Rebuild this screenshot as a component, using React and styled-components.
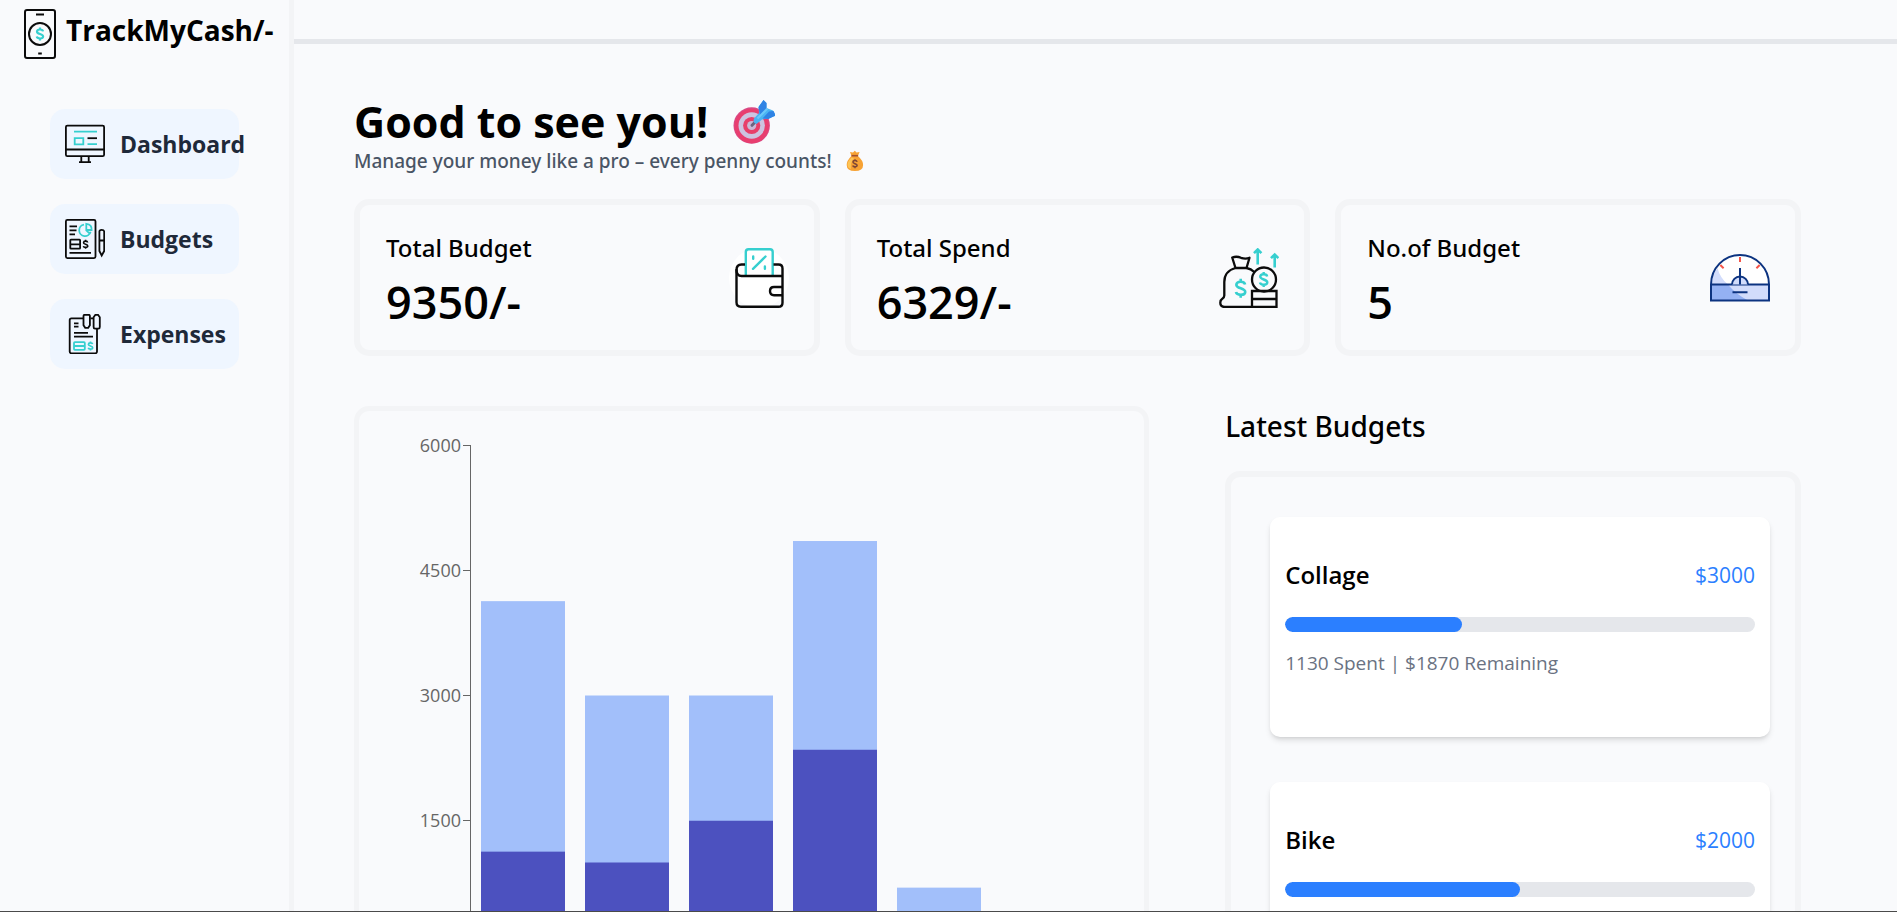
import React from 'react';
import styled, { createGlobalStyle } from 'styled-components';

const GlobalStyle = createGlobalStyle`
  *, *::before, *::after { box-sizing: border-box; }
  body {
    margin: 0;
    background: #f9fafc;
    color: #000;
    font-family: 'Open Sans', 'Noto Sans', sans-serif;
  }
  h1, h2, h3, p { margin: 0; }
`;

const INK = '#0b0b0b';
const TEAL = '#36cfcf';
const MEDIUM_FONT = "'Noto Sans', 'Open Sans', sans-serif";

/* ---------- layout ---------- */

const Shell = styled.div`
  display: grid;
  grid-template-columns: 294px minmax(0, 1fr);
  height: 100vh;
  overflow: hidden;
  border-bottom: 1px solid #4a4a4a;
`;

const Sidebar = styled.aside`
  border-right: 5px solid #f3f4f6;
`;

const Brand = styled.a`
  display: flex;
  gap: 10px;
  height: 59px;
  padding: 9px 0 0 24px;
  color: #000;
  font-size: 28px;
  font-weight: 700;
  line-height: 42px;
  text-decoration: none;
  white-space: nowrap;
`;

const Nav = styled.nav`
  display: flex;
  flex-direction: column;
  gap: 25px;
  padding: 50px 50px 0;
`;

const NavLink = styled.a`
  display: flex;
  align-items: center;
  gap: 15px;
  height: 70px;
  padding: 0 15px;
  border-radius: 15px;
  background: #eff6ff;
  color: #1e2939;
  font-size: 23px;
  font-weight: 700;
  line-height: 40px;
  white-space: nowrap;
  text-decoration: none;

  svg { flex: none; }
`;

const Main = styled.main`
  min-width: 0;
`;

const TopBar = styled.header`
  height: 44px;
  border-bottom: 5px solid #e5e7eb;
`;

const Content = styled.div`
  padding: 53px 96px 0 60px;
`;

const Title = styled.h1`
  display: flex;
  align-items: center;
  gap: 25px;
  font-size: 43px;
  font-weight: 700;
  line-height: 50px;
`;

const Subtitle = styled.p`
  display: flex;
  align-items: center;
  gap: 14px;
  margin-bottom: 24px;
  color: #4a5565;
  font-family: ${MEDIUM_FONT};
  font-size: 19px;
  font-weight: 500;
  line-height: 28px;
`;

const Stats = styled.section`
  display: grid;
  grid-template-columns: repeat(3, minmax(0, 1fr));
  gap: 25px;
  margin-bottom: 50px;
`;

const StatCard = styled.article`
  display: flex;
  align-items: center;
  justify-content: space-between;
  padding: 25px 25px 24px 26px;
  border: 6px solid #f3f4f6;
  border-radius: 15px;
`;

const StatLabel = styled.h2`
  margin-bottom: 12px;
  font-family: ${MEDIUM_FONT};
  font-size: 24px;
  font-weight: 500;
  line-height: 36px;
`;

const StatValue = styled.p`
  font-size: 45px;
  font-weight: 600;
  line-height: 48px;
`;

const Panels = styled.section`
  display: grid;
  grid-template-columns: minmax(0, 58fr) minmax(0, 42fr);
  gap: 76px;
`;

const ChartPanel = styled.div`
  padding: 25px;
  border: 5px solid #f3f4f6;
  border-radius: 15px;

  svg { display: block; }
  text {
    fill: #666;
    font-size: 18px;
  }
`;

const PanelHeading = styled.h2`
  margin-bottom: 25px;
  font-family: ${MEDIUM_FONT};
  font-size: 28px;
  font-weight: 500;
  line-height: 40px;
`;

const BudgetList = styled.ul`
  display: flex;
  flex-direction: column;
  gap: 45px;
  margin: 0;
  padding: 40px 25px 40px 39px;
  border: 6px solid #f3f4f6;
  border-radius: 15px;
  list-style: none;
`;

const BudgetCard = styled.li`
  min-height: 220px;
  padding: 38px 15px 0;
  border-radius: 10px;
  background: #fff;
  box-shadow: 0 4px 6px -1px rgba(0, 0, 0, 0.12), 0 2px 4px -2px rgba(0, 0, 0, 0.12);
`;

const BudgetRow = styled.div`
  display: flex;
  justify-content: space-between;
  margin-bottom: 22px;
  line-height: 40px;
`;

const BudgetName = styled.h3`
  font-size: 24px;
  font-weight: 600;
`;

const BudgetAmount = styled.span`
  color: #2b7fff;
  font-size: 21px;
`;

const Track = styled.div`
  height: 15px;
  margin-bottom: 16px;
  border-radius: 8px;
  background: #e5e7eb;
  overflow: hidden;
`;

const Fill = styled.div`
  height: 100%;
  border-radius: 8px;
  background: #2b7fff;
`;

const BudgetNote = styled.p`
  color: #6a7282;
  font-size: 19px;
  line-height: 30px;
`;

/* ---------- icons ---------- */

const Dollar = ({ x, y, h, color, w }) => (
  <path
    transform={`translate(${x} ${y}) scale(${h / 10})`}
    d="M2.3 -2 C2 -4 -2.2 -4 -2.3 -1.8 C-2.3 .2 2.4 -.2 2.4 1.9 C2.3 4 -2.1 3.9 -2.5 2 M0 -5 V-3.4 M0 3.4 V5"
    fill="none"
    stroke={color}
    strokeWidth={(w * 10) / h}
  />
);

const PhoneIcon = () => (
  <svg width="32" height="50" viewBox="24 9 32 50" fill="none" stroke={INK} strokeWidth="2" aria-hidden="true">
    <rect x="25" y="10" width="30" height="48" rx="2" />
    <path d="M36 14.5h8M38.2 53.5h3.6" />
    <circle cx="40" cy="34" r="11" />
    <Dollar x={40} y={34} h={13} w={2.2} color={TEAL} />
  </svg>
);

const MonitorIcon = () => (
  <svg width="40" height="40" viewBox="65 124 40 40" fill="none" stroke={INK} strokeWidth="1.8" aria-hidden="true">
    <rect x="65.9" y="125.6" width="38.2" height="30.6" rx="1.5" />
    <path d="M66 149.5h38M81.3 156v5.6M88.7 156v5.6M79 162.2h12" />
    <path d="M87.5 138.2h9.5" />
    <path stroke={TEAL} d="M74 131.6h23M87.5 144.2h9.5M74.7 138.2h8.6v6.2h-8.6z" />
  </svg>
);

const ReportIcon = () => (
  <svg width="40" height="40" viewBox="65 219 40 40" fill="none" stroke={INK} strokeWidth="1.8" aria-hidden="true">
    <rect x="65.9" y="219.9" width="29.6" height="38.2" rx="1.5" />
    <path d="M69.5 226.3h7.5M69.5 230.3h7M69.5 234.3h5.5M69.5 252.9h21.5" />
    <path d="M70.3 240.3q0-.6.6-.6h8.6q.6 0 .6.6v7.6q0 .8-.8.8h-8.4q-.6 0-.6-.8zM70.3 244.4h9.8" />
    <Dollar x={85.6} y={244.3} h={9} w={1.6} color={INK} />
    <path d="M99.4 231.5q0-1.700 2.300-1.700t2.500 1.700v19.500l-2.500 4.500l-2.300-4.500zM99.4 240.500h4.800" />
    <path stroke={TEAL} strokeWidth="1.8" d="M84 224.600a5.800 5.800 0 1 0 6.600 7.200M86.300 223.800v6.200h5.300q.6-5.500-5.300-6.200zM86 230.200l4 3.600" />
  </svg>
);

const ReceiptIcon = () => (
  <svg width="40" height="40" viewBox="65 314 40 40" fill="none" stroke={INK} strokeWidth="1.8" aria-hidden="true">
    <path d="M83 318.300H71.500q-1.800 0-1.800 1.800v31.400q0 1.800 1.800 1.800h23.700q1.800 0 1.800-1.800V329M90.500 318.300h3" />
    <path d="M83.500 316q0-1.200 1.200-1.200h4q1.200 0 1.200 1.200v9.200l-1.700 2.600h-3l-1.700-2.600z" />
    <path d="M93.600 317.200l1.800-2.400h2.600l1.800 2.400v9.800q0 1.600-1.400 1.600h-3.400q-1.400 0-1.400-1.600z" />
    <path d="M74 323.300h4.500M74 326.600h4.500M74 332.900h14M74 336.600h19" />
    <path stroke={TEAL} d="M74 342.900q0-.8.800-.8h9.200q.8 0 .8.8v6.200q0 .8-.8.8h-9.200q-.8 0-.8-.8zM74 346h10.800" />
    <Dollar x={90.500} y={346} h={9} w={1.700} color={TEAL} />
  </svg>
);

const WalletIcon = () => (
  <svg width="60" height="60" viewBox="729 248 60 60" fill="none" stroke={INK} strokeWidth="2.4" aria-hidden="true">
    <circle cx="759" cy="278" r="30" fill="#fff" stroke="none" />
    <path stroke={TEAL} d="M745.800 275v-23q0-2.700 2.700-2.700h21.500q2.700 0 2.700 2.700v23" />
    <path stroke={TEAL} strokeLinecap="round" d="M753 268.800l12.500-12.300M753.200 256.500v2.300M764.900 266.500v2.300" />
    <path d="M745 264.500h-3.500q-5 0-5 5.500q0 6 5 6h41.500" />
    <path d="M773.500 264.500h5q4 0 4 4v34.300q0 4-4 4h-37.500q-4.500 0-4.500-4.500v-33" />
    <path d="M782.500 287h-8.500q-4 0-4 4.100t4 4.100h8.500" />
  </svg>
);

const MoneyBagIcon = () => (
  <svg width="60" height="60" viewBox="1219 248 60 60" fill="none" stroke={INK} strokeWidth="2.3" aria-hidden="true">
    <path d="M1235.500 268l-3.300-10.500q4.500-1.600 8.800.3q4.500 1.500 8.500 0l-3 10.200z" strokeLinejoin="round" />
    <path d="M1235.500 268q-11.200 3-11.200 14v13.500q0 2-2 3.300q-2 1.200-2 4q0 4.200 4.500 4.200h27" />
    <path d="M1246.500 268q4.500.8 7.800 4" />
    <circle cx="1264" cy="279.500" r="12" />
    <path d="M1252 291h24.500v15.800h-24.500zM1252 299h24.500" />
    <Dollar x={1240.700} y={288.300} h={19} w={2.600} color={TEAL} />
    <Dollar x={1263.700} y={279.500} h={15} w={2.400} color={TEAL} />
    <path stroke={TEAL} strokeWidth="2.600" d="M1257.700 264.500v-14M1254 253.200l3.700-3.700l3.700 3.700M1274.700 267.500v-12M1271 258.200l3.700-3.700l3.700 3.700" />
  </svg>
);

const GaugeIcon = () => (
  <svg width="60" height="60" viewBox="1710 248 60 60" fill="none" stroke="#0c3380" strokeWidth="2" aria-hidden="true">
    <path stroke="none" fill="#fff" d="M1711 284.500a29 29.500 0 0 1 58 0z" />
    <path stroke="none" fill="#d2dcfb" d="M1711 284.500q.5-8.500 6.500-16.500q2.500 10 10.500 16.500z" />
    <path stroke="none" fill="#d2dcfb" d="M1711 284.500h58v16h-58z" />
    <path stroke="none" fill="#94b1f3" d="M1711 284.500h17q7 9 20 16h-37z" />
    <path d="M1711 284.500a29 29.500 0 0 1 58 0v16h-58zM1711 284.500h58" />
    <path fill="#d2dcfb" d="M1732 284.500a8 8 0 0 1 16 0" />
    <path d="M1740 268v16.500M1732.500 292.300h15" />
    <path stroke="#f5564a" d="M1740 257v5M1720.300 265l3.300 3.300M1759.700 265l-3.300 3.300" />
  </svg>
);

const TargetEmoji = () => (
  <svg width="42" height="46" viewBox="707 99 42 46" aria-hidden="true">
    <circle cx="725.700" cy="125.500" r="18.200" fill="#d84a86" />
    <circle cx="725.700" cy="126" r="17.200" fill="#e83e6f" />
    <circle cx="725.700" cy="125.500" r="13.200" fill="#cdc3e0" />
    <circle cx="725.700" cy="125.500" r="8.600" fill="#e83e6a" />
    <circle cx="725.700" cy="125.500" r="4.600" fill="#c9b8d6" />
    <path d="M726 125.300l5-5" stroke="#6b6480" strokeWidth="3" strokeLinecap="round" />
    <path d="M728 118.500l5-5.500l-.5-6l5-7l3 3v5l6.500 2.500l3 5l-8 3l-6 1l-5.500 4.500q-4-1-2.500-5.500z" fill="#4bb4f2" />
    <path d="M732.500 107l5-7l3 3v5.500l-6.500 7zM736.500 118.500l6.500-7l4.500-.5l2 4.500l-7 3.500z" fill="#2f83e4" />
    <path d="M731.500 118.500l10-10" stroke="#6cc8fa" strokeWidth="2" />
  </svg>
);

const BagEmoji = () => (
  <svg width="18" height="22" viewBox="812 149 18 22" aria-hidden="true">
    <path d="M817.500 155l-1.500-4l3 .500l1.800-1.800l1.800 1.800l3-.5l-1.700 4q5.200 4.500 5.200 9q0 6-8.200 6t-8.200-6q0-4.500 4.800-9z" fill="#f7a234" />
    <path d="M817.500 156.500q-4 4-4 7q0 3.500 3.500 4.500q-1-6 3-11z" fill="#fdc456" />
    <path d="M817.500 154.700h6.600" stroke="#a3502e" strokeWidth="1.600" />
    <Dollar x={821} y={162.700} h={9} w={1.500} color="#7c4536" />
  </svg>
);

/* ---------- chart ---------- */

const budgets = [
  { name: 'Collage', amount: 3000, spent: 1130 },
  { name: 'Bike', amount: 2000, spent: 1000 },
  { name: 'Travel', amount: 1500, spent: 1500 },
  { name: 'Home', amount: 2500, spent: 2350 },
  { name: 'Books', amount: 350, spent: 349 },
];

const AXIS_X = 86;
const AXIS_TOP = 9;
const AXIS_HEIGHT = 501;
const AXIS_MAX = 6000;
const BAR_PITCH = 104;
const BAR_WIDTH = 84;
const TICKS = [0, 1500, 3000, 4500, 6000];
const toY = (value) => AXIS_TOP + AXIS_HEIGHT * (1 - value / AXIS_MAX);
const tickY = (value) => Math.floor(toY(value));

const BudgetChart = () => (
  <svg width="640" height="540" viewBox="0 0 640 540" role="img" aria-label="Budget and spend per category">
    {budgets.map((b, i) => {
      const x = AXIS_X + 11 + i * BAR_PITCH;
      const top = toY(b.spent + b.amount);
      const split = toY(b.spent);
      return (
        <g key={b.name}>
          <rect x={x} y={top} width={BAR_WIDTH} height={toY(0) - top} fill="#a2bffa" />
          <rect x={x} y={split} width={BAR_WIDTH} height={toY(0) - split} fill="#4c51bf" />
        </g>
      );
    })}
    <g stroke="#666" shapeRendering="crispEdges">
      <line x1={AXIS_X + 0.5} x2={AXIS_X + 0.5} y1={AXIS_TOP} y2={toY(0)} />
      {TICKS.map((v) => (
        <line key={v} x1={AXIS_X - 7} x2={AXIS_X} y1={tickY(v)} y2={tickY(v)} />
      ))}
    </g>
    {TICKS.map((v) => (
      <text key={v} x={AXIS_X - 9} y={tickY(v) + 7} textAnchor="end">{v}</text>
    ))}
  </svg>
);

/* ---------- page ---------- */

const navItems = [
  { label: 'Dashboard', Icon: MonitorIcon },
  { label: 'Budgets', Icon: ReportIcon },
  { label: 'Expenses', Icon: ReceiptIcon },
];

const stats = [
  { label: 'Total Budget', value: '9350/-', Icon: WalletIcon },
  { label: 'Total Spend', value: '6329/-', Icon: MoneyBagIcon },
  { label: 'No.of Budget', value: '5', Icon: GaugeIcon },
];

export default function App() {
  return (
    <Shell>
      <GlobalStyle />
      <Sidebar>
        <Brand href="#">
          <PhoneIcon />
          TrackMyCash/-
        </Brand>
        <Nav>
          {navItems.map(({ label, Icon }) => (
            <NavLink key={label} href={`#${label.toLowerCase()}`}>
              <Icon />
              {label}
            </NavLink>
          ))}
        </Nav>
      </Sidebar>
      <Main>
        <TopBar />
        <Content>
          <Title>Good to see you! <TargetEmoji /></Title>
          <Subtitle>Manage your money like a pro – every penny counts! <BagEmoji /></Subtitle>
          <Stats>
            {stats.map(({ label, value, Icon }) => (
              <StatCard key={label}>
                <div>
                  <StatLabel>{label}</StatLabel>
                  <StatValue>{value}</StatValue>
                </div>
                <Icon />
              </StatCard>
            ))}
          </Stats>
          <Panels>
            <ChartPanel>
              <BudgetChart />
            </ChartPanel>
            <div>
              <PanelHeading>Latest Budgets</PanelHeading>
              <BudgetList>
                {budgets.slice(0, 2).map((b) => (
                  <BudgetCard key={b.name}>
                    <BudgetRow>
                      <BudgetName>{b.name}</BudgetName>
                      <BudgetAmount>${b.amount}</BudgetAmount>
                    </BudgetRow>
                    <Track role="progressbar" aria-label={b.name} aria-valuenow={b.spent} aria-valuemin={0} aria-valuemax={b.amount}>
                      <Fill style={{ width: `${(b.spent / b.amount) * 100}%` }} />
                    </Track>
                    <BudgetNote>{b.spent} Spent | ${b.amount - b.spent} Remaining</BudgetNote>
                  </BudgetCard>
                ))}
              </BudgetList>
            </div>
          </Panels>
        </Content>
      </Main>
    </Shell>
  );
}
